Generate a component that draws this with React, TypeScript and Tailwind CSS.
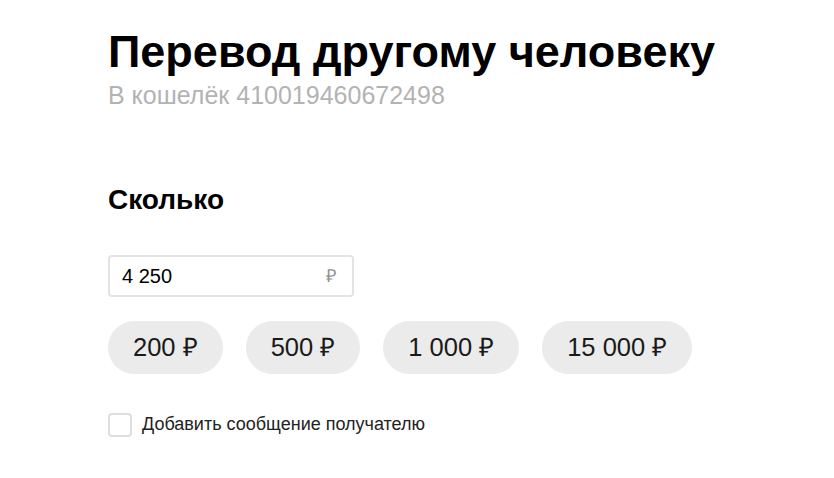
export default function App() {
  const presets = ['200 ₽', '500 ₽', '1 000 ₽', '15 000 ₽'];

  return (
    <div className="min-h-screen bg-white pl-[108px] pt-[25px] font-['Liberation_Sans',Arial,sans-serif] text-black">
      {/* Header */}
      <h1 className="text-[45px] font-bold leading-[54px]">Перевод другому человеку</h1>
      <p className="text-[25px] leading-[32px] text-[#b3b3b3]">В кошелёк 410019460672498</p>

      {/* Amount */}
      <h2 className="mt-[74px] text-[28px] font-bold leading-[30px]">Сколько</h2>

      <div className="mt-[40px] flex h-[42px] w-[246px] items-center justify-between rounded-[4px] border-2 border-[#e3e3e3] pl-[12px] pr-[16px]">
        <input
          type="text"
          defaultValue="4 250"
          className="w-[160px] bg-transparent text-[20px] text-black focus:outline-none"
        />
        <span className="text-[18px] text-[#929292]">₽</span>
      </div>

      <div className="mt-[24px] flex gap-[23px]">
        {presets.map((p) => (
          <button
            key={p}
            className="h-[53px] rounded-full bg-[#ebebeb] px-[25px] text-[25.5px] text-[#1a1a1a]"
          >
            {p}
          </button>
        ))}
      </div>

      {/* Message checkbox */}
      <label className="mt-[37px] flex items-center gap-[10px]">
        <span className="h-[24px] w-[24px] rounded-[4px] border-2 border-[#dedede] bg-white" />
        <span className="text-[18px] text-[#222]">Добавить сообщение получателю</span>
      </label>
    </div>
  );
}
